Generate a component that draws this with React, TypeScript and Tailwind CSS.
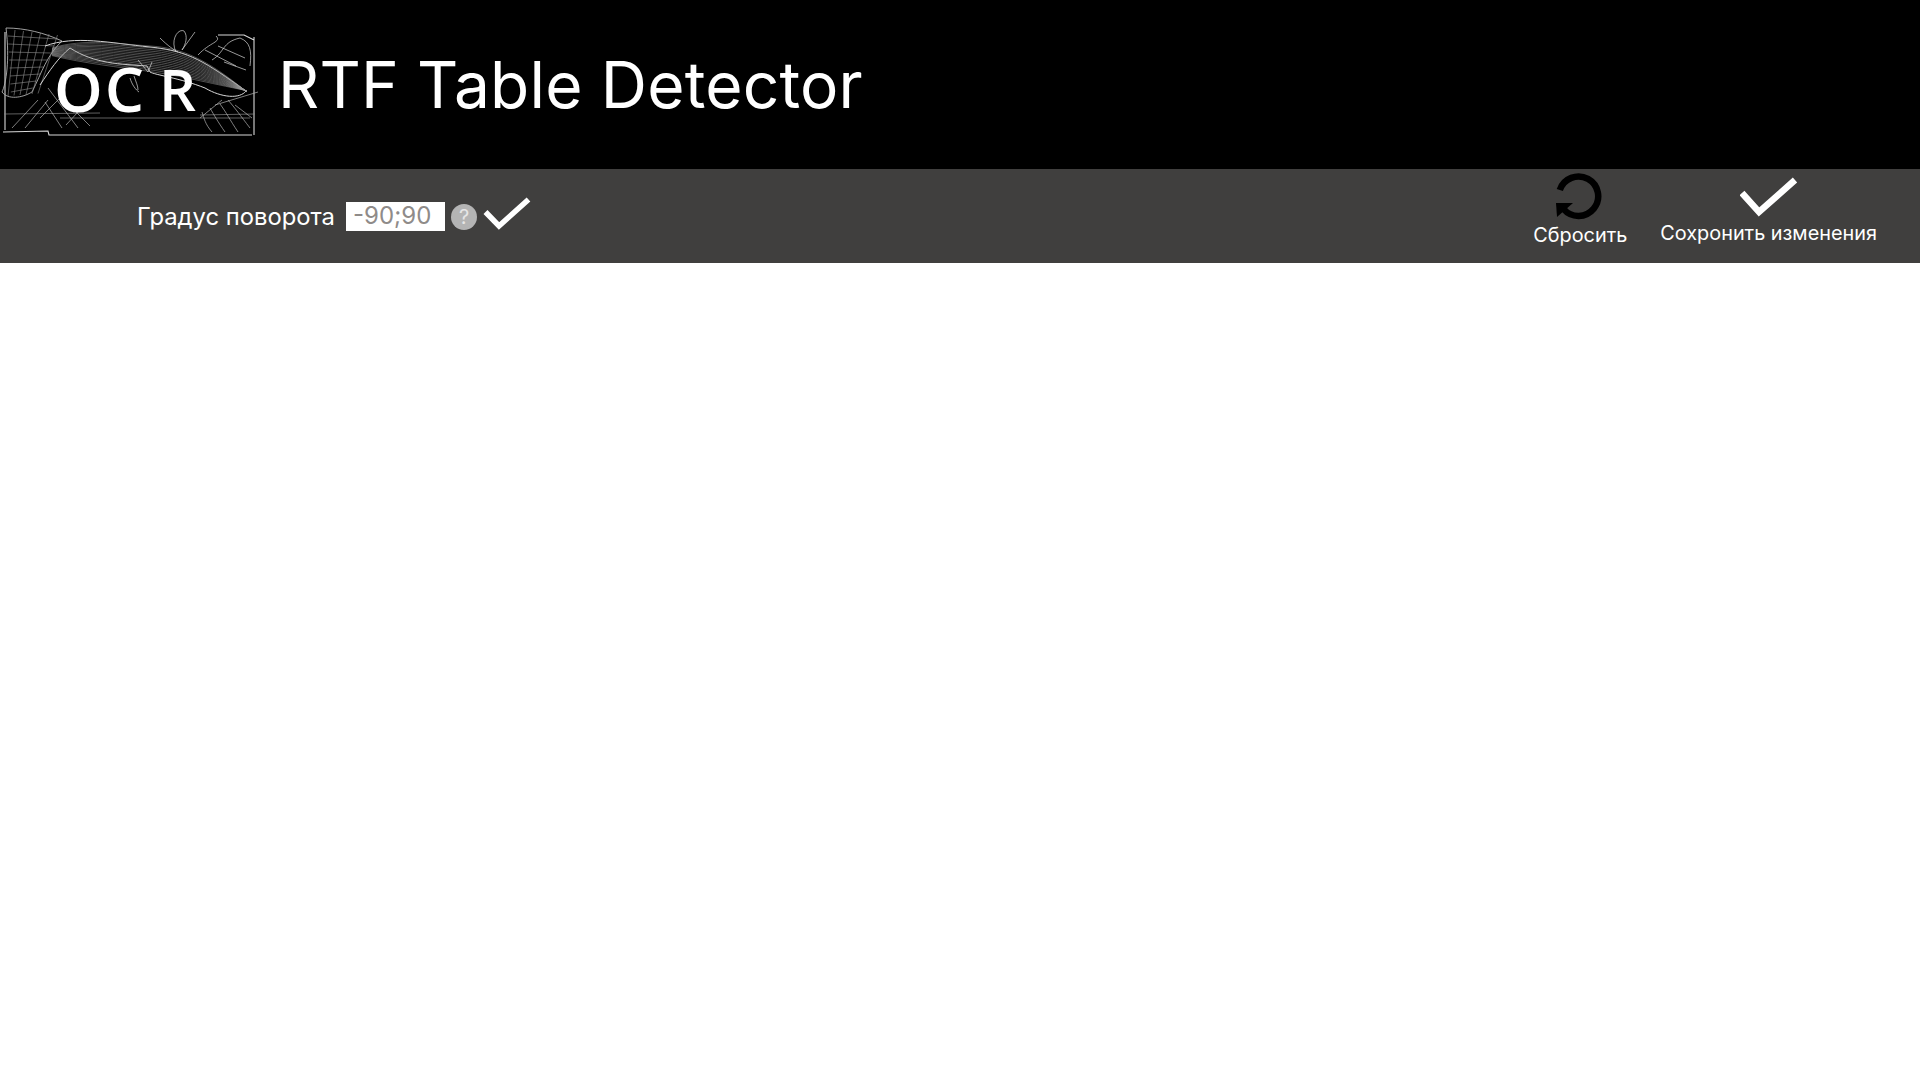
import { useMemo } from "react";

const sans = "font-['Inter','Noto_Sans',sans-serif]";

function OcrLogo() {
  // stream lines of the fish, tail fork to head
  const bodyLines = useMemo(
    () =>
      Array.from({ length: 16 }, (_, i) => {
        const d = i * 1.7;
        return `M52 ${48 + d * 0.3}C85 ${38 + d},118 ${44 + d * 0.9},150 ${46 + d}S205 ${58 + d * 0.95},247 ${92 - d * 0.05}`;
      }),
    [],
  );
  const tailRows = [0, 1, 2, 3, 4, 5, 6, 7];
  const tailCols = [0, 1, 2, 3, 4, 5];

  return (
    <div className="relative h-[169px] w-[262px] shrink-0">
      <svg
        viewBox="0 0 262 169"
        className="h-full w-full"
        fill="none"
        stroke="#d8d8d8"
        strokeWidth="0.7"
        aria-hidden
      >
        {/* frame */}
        <path d="M5 32V130M3 132L48 131 49 135 252 135M254 37V135M218 35H244L254 40" strokeWidth="1.1" />
        <path d="M4 114L100 113M60 118H250M200 115L255 114" stroke="#8a8a8a" />
        {/* tail */}
        <path d="M6 28C25 28 45 33 62 41 47 55 42 72 32 92 22 98 8 100 2 92 6 84 10 60 6 28Z" stroke="#b0b0b0" strokeWidth="0.9" />
        {tailRows.map((r) => (
          <path key={r} d={`M${8 + r * 0.4} ${36 + r * 8}L${58 - r * 3.6} ${39 + r * 7}`} stroke="#8e8e8e" strokeWidth="0.6" />
        ))}
        {tailCols.map((c) => (
          <path key={c} d={`M${15 + c * 8.5} ${30 + c}L${8 + c * 6} ${96 - c * 0.5}`} stroke="#8e8e8e" strokeWidth="0.6" />
        ))}
        {/* body */}
        <path
          d="M45 46C75 35 110 43 150 47S205 62 246 91C240 99 222 98 205 88 180 78 155 75 150 72L147 66C120 64 95 64 70 48 58 58 50 70 40 85"
          strokeWidth="1"
        />
        {bodyLines.map((d) => (
          <path key={d} d={d} stroke="#9c9c9c" strokeWidth="0.5" />
        ))}
        <path d="M138 60L148 72 152 62M130 78C132 85 136 90 139 92M134 76C136 82 138 86 138 90" />
        {/* fins, upper right */}
        <path d="M160 38C168 46 174 50 178 52M176 52C170 40 178 28 184 31 188 36 186 44 182 50L195 32M198 55C210 42 222 42 216 36M212 60C225 52 222 42 240 38 250 42 252 50 250 66M205 50L236 66M218 46L245 58M224 62L246 70" />
        {/* web, lower left */}
        <path d="M12 128L38 100M25 128L48 100M40 118L62 96M62 128L45 102M78 128L48 88M90 126L68 104M66 125L78 112" stroke="#b5b5b5" />
        {/* web, lower right */}
        <path d="M200 118L222 100M212 132C205 124 204 118 202 112M225 132C218 122 214 115 210 108M238 132C230 120 226 112 220 104M250 128C240 115 235 108 228 100M215 105L258 92M235 105L252 118" stroke="#b5b5b5" />
      </svg>
      <span className="absolute left-[54px] top-[57px] font-['Open_Sans',sans-serif] text-[62px] leading-[1] font-semibold tracking-[2px] text-white">
        OC
      </span>
      <span className="absolute left-[159px] top-[60px] font-['Open_Sans',sans-serif] text-[58px] leading-[1] font-semibold text-white">
        R
      </span>
    </div>
  );
}

function ReloadIcon() {
  return (
    <svg viewBox="0 0 48 48" className="h-12 w-12" fill="none" aria-hidden>
      <path d="M3.8 18A19.7 19.7 0 1 1 7.5 37" stroke="#000" strokeWidth="6.5" />
      <path d="M0 31L1 45 17 31Z" fill="#000" />
    </svg>
  );
}

export default function App() {
  return (
    <div className={`min-h-screen bg-white ${sans}`}>
      <header className="flex h-[169px] items-center bg-black">
        <OcrLogo />
        <h1 className="ml-4 text-[64px] leading-none font-normal tracking-[0.2px] text-white">
          RTF Table Detector
        </h1>
      </header>
      <div className="flex h-[94px] items-center justify-between bg-[#403f3e] pr-[43px] pl-[137px] text-white">
        <div className="flex items-center pt-[2px]">
          <span className="text-[23.8px]">Градус поворота</span>
          <input
            readOnly
            placeholder="-90;90"
            className="mb-[2px] ml-[11px] h-[29px] w-[99px] bg-white pr-2 pl-[7px] text-2xl text-black outline-none placeholder:text-[#8f8b89]"
          />
          <span className="ml-[6px] flex h-[26px] w-[26px] items-center justify-center rounded-full bg-[#b4b4b4] text-xl text-[#e6e6e6]">
            ?
          </span>
          <svg viewBox="0 0 48 34" className="mb-[6px] ml-[6px] h-[34px] w-[48px]" fill="none" aria-hidden>
            <path d="M2.5 15L16 29 45.5 2.5" stroke="#fff" strokeWidth="5.5" />
          </svg>
        </div>
        <div className="flex h-full items-start gap-[33px] pt-[3px]">
          <button type="button" className="flex flex-col items-center">
            <ReloadIcon />
            <span className="mt-[3px] text-[19.85px] leading-6">Сбросить</span>
          </button>
          <button type="button" className="flex flex-col items-center">
            <svg viewBox="0 0 58 40" className="mt-[5px] h-10 w-[58px]" fill="none" aria-hidden>
              <path d="M2 16L19 35 55 3" stroke="#fff" strokeWidth="6.5" />
            </svg>
            <span className="mt-1 text-[19.85px] leading-6">Сохронить изменения</span>
          </button>
        </div>
      </div>
    </div>
  );
}
